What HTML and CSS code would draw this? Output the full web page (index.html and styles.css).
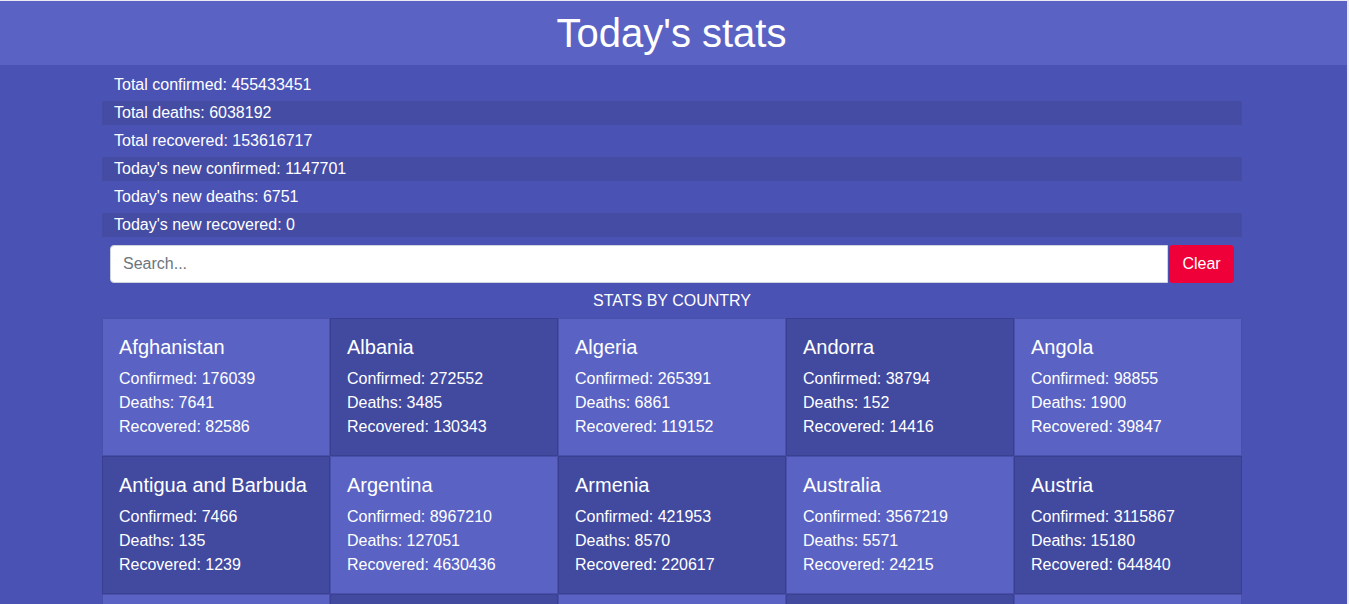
FILE: index.html
```html
<!DOCTYPE html>
<html lang="en">
<head>
<meta charset="utf-8">
<title>Today's stats</title>
<link rel="stylesheet" href="styles.css">
</head>
<body>
<div class="app">
  <header class="header"><h1 class="title">Today's stats</h1></header>
  <main class="main">
    <div class="container">
      <ul class="totals">
        <li class="total">Total confirmed: 455433451</li>
        <li class="total alt">Total deaths: 6038192</li>
        <li class="total">Total recovered: 153616717</li>
        <li class="total alt">Today's new confirmed: 1147701</li>
        <li class="total">Today's new deaths: 6751</li>
        <li class="total alt">Today's new recovered: 0</li>
      </ul>
      <div class="search">
        <input class="search-input" type="text" placeholder="Search...">
        <button class="clear-btn">Clear</button>
      </div>
      <h2 class="section-title">STATS BY COUNTRY</h2>
      <div class="grid">
        <div class="card light"><h3 class="name">Afghanistan</h3><p class="line">Confirmed: 176039</p><p class="line">Deaths: 7641</p><p class="line">Recovered: 82586</p></div>
        <div class="card dark"><h3 class="name">Albania</h3><p class="line">Confirmed: 272552</p><p class="line">Deaths: 3485</p><p class="line">Recovered: 130343</p></div>
        <div class="card light"><h3 class="name">Algeria</h3><p class="line">Confirmed: 265391</p><p class="line">Deaths: 6861</p><p class="line">Recovered: 119152</p></div>
        <div class="card dark"><h3 class="name">Andorra</h3><p class="line">Confirmed: 38794</p><p class="line">Deaths: 152</p><p class="line">Recovered: 14416</p></div>
        <div class="card light"><h3 class="name">Angola</h3><p class="line">Confirmed: 98855</p><p class="line">Deaths: 1900</p><p class="line">Recovered: 39847</p></div>
        <div class="card dark"><h3 class="name">Antigua and Barbuda</h3><p class="line">Confirmed: 7466</p><p class="line">Deaths: 135</p><p class="line">Recovered: 1239</p></div>
        <div class="card light"><h3 class="name">Argentina</h3><p class="line">Confirmed: 8967210</p><p class="line">Deaths: 127051</p><p class="line">Recovered: 4630436</p></div>
        <div class="card dark"><h3 class="name">Armenia</h3><p class="line">Confirmed: 421953</p><p class="line">Deaths: 8570</p><p class="line">Recovered: 220617</p></div>
        <div class="card light"><h3 class="name">Australia</h3><p class="line">Confirmed: 3567219</p><p class="line">Deaths: 5571</p><p class="line">Recovered: 24215</p></div>
        <div class="card dark"><h3 class="name">Austria</h3><p class="line">Confirmed: 3115867</p><p class="line">Deaths: 15180</p><p class="line">Recovered: 644840</p></div>
        <div class="card light"><h3 class="name">Azerbaijan</h3><p class="line">Confirmed: 790000</p><p class="line">Deaths: 9640</p><p class="line">Recovered: 562000</p></div>
        <div class="card dark"><h3 class="name">Bahamas</h3><p class="line">Confirmed: 33000</p><p class="line">Deaths: 780</p><p class="line">Recovered: 12000</p></div>
        <div class="card light"><h3 class="name">Bahrain</h3><p class="line">Confirmed: 550000</p><p class="line">Deaths: 1460</p><p class="line">Recovered: 270000</p></div>
        <div class="card dark"><h3 class="name">Bangladesh</h3><p class="line">Confirmed: 1950000</p><p class="line">Deaths: 29100</p><p class="line">Recovered: 1540000</p></div>
        <div class="card light"><h3 class="name">Barbados</h3><p class="line">Confirmed: 58000</p><p class="line">Deaths: 320</p><p class="line">Recovered: 8000</p></div>
      </div>
    </div>
  </main>
</div>
</body>
</html>
```

FILE: styles.css
```css
html {
  background: #e9eaf4;
}
body {
  margin: 0;
  font-family: "Liberation Sans", Arial, sans-serif;
  color: #ffffff;
}
.app {
  margin: 1px 2px 0 0;
  background: #4a52b4;
  min-height: 603px;
}
.header {
  background: #5a63c4;
  padding: 8px 4px 8px 0;
}
.title {
  margin: 0;
  font-size: 40px;
  font-weight: 400;
  line-height: 48px;
  text-align: center;
}
.main {
  padding: 8px 3px 0 0;
}
.container {
  width: 1140px;
  margin: 0 auto;
}
.totals {
  list-style: none;
  margin: 0;
  padding: 0;
}
.total {
  height: 24px;
  line-height: 24px;
  margin-bottom: 4px;
  padding-left: 12px;
  font-size: 16px;
}
.total.alt {
  background: #444ca4;
}
.search {
  display: flex;
  padding: 4px 8px 0 8px;
  height: 38px;
}
.search-input {
  flex: 1;
  min-width: 0;
  height: 38px;
  box-sizing: border-box;
  border: 1px solid #ced4da;
  border-radius: 4px 0 0 4px;
  padding: 6px 12px;
  font-family: "Liberation Sans", Arial, sans-serif;
  font-size: 16px;
  color: #495057;
  background: #ffffff;
  outline: none;
}
.search-input::placeholder {
  color: #6c757d;
}
.clear-btn {
  width: 65px;
  height: 38px;
  margin-left: 1px;
  border: 0;
  border-radius: 4px;
  background: #ef0039;
  color: #ffffff;
  font-family: "Liberation Sans", Arial, sans-serif;
  font-size: 16px;
  padding: 0;
}
.section-title {
  margin: 0;
  padding: 10px 0 9px;
  font-size: 16px;
  font-weight: 400;
  line-height: 16px;
  text-align: center;
}
.grid {
  display: grid;
  grid-template-columns: repeat(5, 228px);
}
.card {
  box-sizing: border-box;
  height: 138px;
  padding: 16px;
  border: 1px solid rgba(40, 45, 120, 0.35);
}
.card.light {
  background: #5a63c3;
}
.card.dark {
  background: #424aa0;
}
.name {
  margin: 0 0 8px;
  font-size: 20px;
  font-weight: 400;
  line-height: 24px;
}
.line {
  margin: 0;
  font-size: 16px;
  line-height: 24px;
}
```
